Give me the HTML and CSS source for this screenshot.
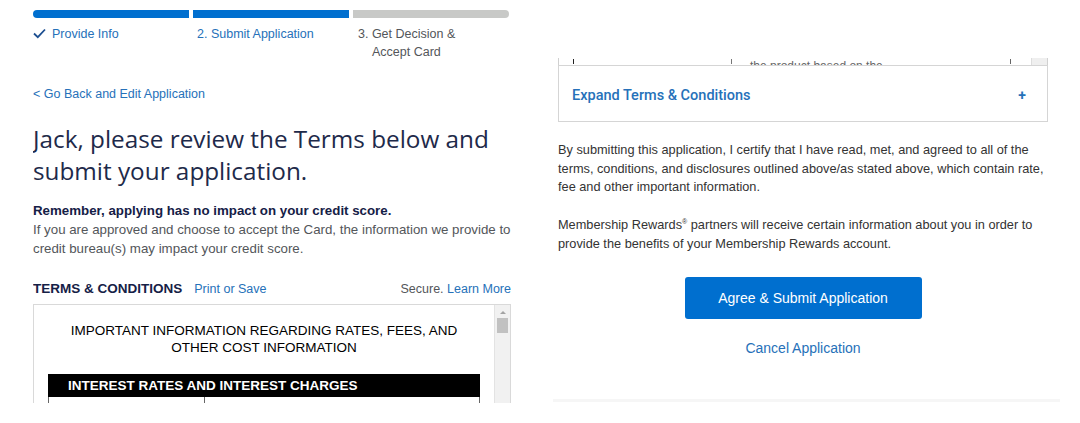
FILE: index.html
```html
<!DOCTYPE html>
<html lang="en">
<head>
<meta charset="utf-8">
<title>Review Terms</title>
<link rel="stylesheet" href="styles.css">
</head>
<body>
<div class="page">
  <section class="left">
    <div class="progress">
      <div class="seg seg-done"></div>
      <div class="seg seg-done"></div>
      <div class="seg seg-todo"></div>
    </div>
    <div class="steps">
      <div class="step step-done">
        <svg class="check" width="13" height="11" viewBox="0 0 13 11"><path d="M1 5.5 L4.8 9.2 L12 1.5" fill="none" stroke="#1d4f91" stroke-width="1.8"/></svg>
        <span>Provide Info</span>
      </div>
      <div class="step step-current">2. Submit Application</div>
      <div class="step step-next">3. Get Decision &amp; Accept Card</div>
    </div>
    <a class="back" href="#">&lt; Go Back and Edit Application</a>
    <h1 class="title">Jack, please review the Terms below and submit your application.</h1>
    <p class="remember">Remember, applying has no impact on your credit score.</p>
    <p class="note">If you are approved and choose to accept the Card, the information we provide to credit bureau(s) may impact your credit score.</p>
    <div class="terms-head">
      <span class="terms-title">TERMS &amp; CONDITIONS</span>
      <a class="link" href="#">Print or Save</a>
      <span class="secure">Secure. <a class="link" href="#">Learn More</a></span>
    </div>
    <div class="terms-box">
      <div class="terms-content">
        <p class="terms-h">IMPORTANT INFORMATION REGARDING RATES, FEES, AND OTHER COST INFORMATION</p>
        <div class="rates-bar">INTEREST RATES AND INTEREST CHARGES</div>
        <div class="rates-row"><div class="cell c1"></div><div class="cell c2"></div></div>
      </div>
      <div class="scrollbar">
        <div class="sb-arrow"></div>
        <div class="sb-thumb"></div>
      </div>
    </div>
  </section>

  <section class="right">
    <div class="clip">
      <span class="tick t1"></span>
      <span class="tick t2"></span>
      <span class="clip-text">the product based on the</span>
      <span class="tick t3"></span>
      <span class="clip-sb"></span>
    </div>
    <div class="expand">
      <span class="expand-label">Expand Terms &amp; Conditions</span>
      <span class="plus">+</span>
    </div>
    <p class="body body-first">By submitting this application, I certify that I have read, met, and agreed to all of the terms, conditions, and disclosures outlined above/as stated above, which contain rate, fee and other important information.</p>
    <p class="body body-second">Membership Rewards<sup>®</sup> partners will receive certain information about you in order to provide the benefits of your Membership Rewards account.</p>
    <div class="actions">
      <button class="submit" type="button">Agree &amp; Submit Application</button>
      <a class="cancel" href="#">Cancel Application</a>
    </div>
    <div class="rule"></div>
  </section>
</div>
</body>
</html>
```

FILE: styles.css
```css
* { box-sizing: border-box; }
html, body { margin: 0; padding: 0; background: #fff; }
body {
  font-family: "Liberation Sans", Arial, sans-serif;
  color: #53565a;
  width: 1080px;
  height: 423px;
  overflow: hidden;
}
a { text-decoration: none; }
p { margin: 0; }

.page {
  display: flex;
  padding-left: 33px;
}

/* LEFT */
.left {
  width: 478px;
  height: 403px;
  overflow: hidden;
  padding-top: 10px;
}
.progress {
  display: grid;
  grid-template-columns: 156px 156px 156px;
  gap: 4px;
  width: 476px;
}
.seg { height: 8px; }
.seg-done { background: #006fcf; }
.progress .seg:first-child { border-radius: 4px 0 0 4px; }
.progress .seg:last-child { border-radius: 0 4px 4px 0; }
.seg-todo { background: #c8c9c7; }

.steps {
  display: grid;
  grid-template-columns: 156px 156px 156px;
  gap: 4px;
  margin-top: 7px;
  font-size: 12.5px;
  line-height: 18px;
}
.step-done { display: flex; align-items: center; gap: 6px; color: #2671b9; height: 18px; }
.check { display: block; margin-top: -1px; }
.step-current { color: #2671b9; padding-left: 4px; }
.step-next { color: #53565a; padding-left: 19px; text-indent: -14px; width: 125px; }

.back {
  display: block;
  margin-top: 24px;
  font-size: 12.5px;
  line-height: 18px;
  color: #2671b9;
}

.title {
  margin: 20px 0 0;
  font-family: "Open Sans", "Liberation Sans", sans-serif;
  font-weight: 400;
  font-size: 24.3px;
  line-height: 32px;
  color: #1e2a4a;
}

.remember {
  margin-top: 14px;
  font-weight: 700;
  font-size: 13.3px;
  line-height: 19px;
  color: #152046;
}
.note {
  font-size: 13.3px;
  line-height: 19px;
  color: #53565a;
}

.terms-head {
  display: flex;
  align-items: baseline;
  margin-top: 22px;
  height: 18px;
  font-size: 12.5px;
  line-height: 18px;
}
.terms-title { font-weight: 700; color: #152046; font-size: 13.5px; }
.terms-head > .link { margin-left: 12px; }
.link { color: #2671b9; }
.secure { margin-left: auto; color: #53565a; }

.terms-box {
  margin-top: 6px;
  border: 1px solid #d9d9d9;
  display: flex;
  height: 110px;
  width: 478px;
}
.terms-content {
  flex: 1;
  padding: 17px 14px 0;
}
.terms-h {
  font-size: 13.5px;
  line-height: 17px;
  color: #000;
  text-align: center;
  padding: 0 6px;
}
.rates-bar {
  margin-top: 18px;
  background: #000;
  color: #fff;
  font-weight: 700;
  font-size: 13.5px;
  line-height: 23px;
  height: 23px;
  padding-left: 20px;
}
.rates-row {
  display: flex;
  height: 10px;
  border-left: 1px solid #666;
  border-right: 1px solid #666;
}
.rates-row .c1 { width: 156px; border-right: 1px solid #666; }

.scrollbar {
  width: 16px;
  background: #f1f1f1;
  border-left: 1px solid #e3e3e3;
  padding-top: 6px;
  display: flex;
  flex-direction: column;
  align-items: center;
}
.sb-arrow {
  width: 0; height: 0;
  border-left: 3px solid transparent;
  border-right: 3px solid transparent;
  border-bottom: 3px solid #a3a3a3;
}
.sb-thumb {
  margin-top: 4px;
  width: 11px;
  height: 15px;
  background: #c1c1c1;
}

/* RIGHT */
.right {
  margin-left: 42px;
  width: 507px;
  padding-top: 58px;
}
.clip {
  position: relative;
  margin-left: 5px;
  width: 490px;
  height: 7px;
  border-left: 1px solid #d0d0d0;
  border-right: 1px solid #d0d0d0;
  overflow: hidden;
}
.tick { position: absolute; top: 1px; width: 1px; height: 5px; background: #222; }
.t1 { left: 14px; }
.t2 { left: 172px; background: #777; }
.t3 { left: 451px; background: #666; }
.clip-text {
  position: absolute;
  left: 191px;
  top: 2px;
  font-size: 12px;
  line-height: 12px;
  color: #666;
}
.clip-sb { position: absolute; right: 0; top: 0; width: 16px; height: 7px; background: #efefef; border-left: 1px solid #ddd; }

.expand {
  margin-left: 5px;
  width: 490px;
  height: 57px;
  border: 1px solid #d5d5d5;
  display: flex;
  align-items: center;
  padding: 3px 21px 0 13px;
}
.expand-label {
  font-family: Roboto, "Liberation Sans", sans-serif;
  font-weight: 500;
  font-size: 14.5px;
  color: #2671b9;
}
.plus {
  margin-left: auto;
  font-family: Roboto, "Liberation Sans", sans-serif;
  font-weight: 700;
  font-size: 14px;
  color: #2671b9;
}

.body {
  margin-left: 5px;
  width: 495px;
  font-size: 12.75px;
  line-height: 18.5px;
  color: #333;
}
.body-first { margin-top: 19px; }
.body-second { margin-top: 19.5px; }
sup { font-size: 7px; line-height: 0; vertical-align: 5px; }

.actions {
  display: flex;
  flex-direction: column;
  align-items: center;
  margin-left: 5px;
  width: 490px;
  margin-top: 24px;
}
.submit {
  width: 237px;
  height: 42px;
  border: 0;
  border-radius: 3px;
  background: #006fcf;
  color: #fff;
  font-family: "Liberation Sans", Arial, sans-serif;
  font-size: 14px;
  cursor: pointer;
}
.cancel {
  margin-top: 20px;
  font-size: 14px;
  line-height: 18px;
  color: #2671b9;
}
.rule {
  margin-top: 42px;
  height: 3px;
  background: #f6f6f6;
  width: 507px;
}
```
